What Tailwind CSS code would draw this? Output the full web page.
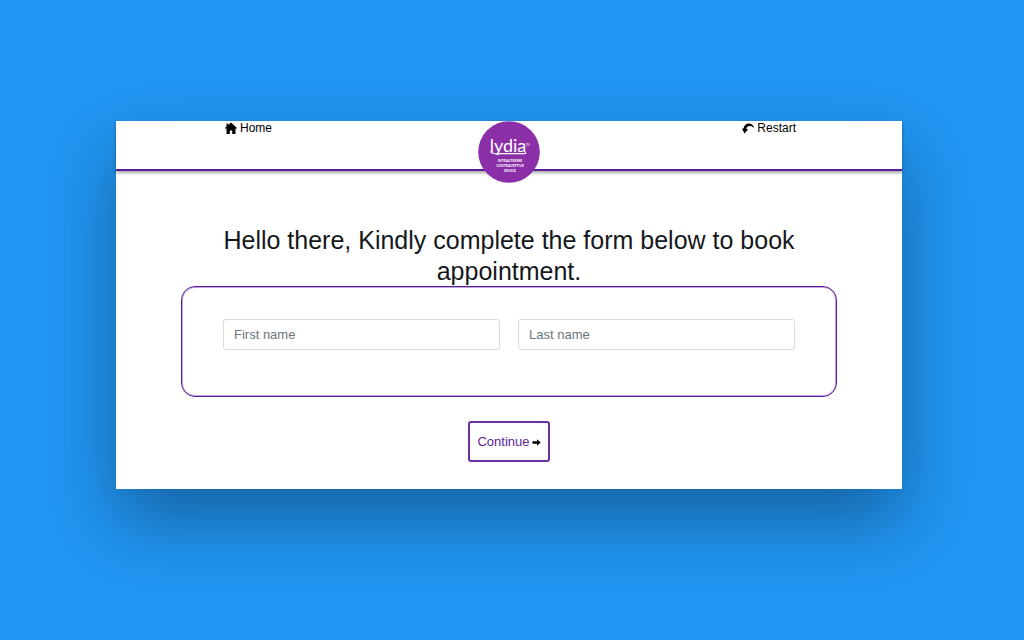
<!DOCTYPE html>
<html lang="en">
<head>
<meta charset="utf-8">
<meta name="viewport" content="width=device-width, initial-scale=1">
<title>Book appointment</title>
<script src="https://cdn.jsdelivr.net/npm/@tailwindcss/browser@4"></script>
</head>
<body class="min-h-screen bg-[#2196f3] pt-[121px] pr-1.5 pb-10 font-['Liberation_Sans',Arial,sans-serif] text-[#15181b]">
<div class="mx-auto max-w-[786px] bg-white pb-[27px] shadow-[0_32px_68px_rgba(0,0,0,0.34)]">
  <header class="relative h-[50px] border-b-2 border-[#5b1d99] px-[106px] text-xs leading-[14px] text-black shadow-[0_2px_3px_rgba(0,0,0,0.35)]">
    <nav class="flex justify-between">
      <a href="#" class="flex items-center gap-[3px] pl-[3px]">
        <svg class="size-3" viewBox="0 0 12 12" aria-hidden="true"><path d="M6 .4 3.200 3V1.500H1.500v3.100L0 6.100l.5.700 1-.5V12H4.800V8.500h2.400V12h3.300V6.300l1 .5.500-.7z"/></svg>
        Home
      </a>
      <a href="#" class="flex items-center gap-[3px]">
        <svg class="size-3" viewBox="0 0 12 12" aria-hidden="true"><path d="M0 6.700 1.500 6.400C2.200 3 4.700 1.200 7.400 1.600c2.600.4 4.300 2.200 4.600 4.800C10.600 4.500 9.300 3.900 7.700 3.900 5.900 3.900 4.700 4.900 4.300 6.700L6 7.400 2.500 11.500z"/></svg>
        Restart
      </a>
    </nav>
    <svg class="absolute top-0 left-1/2 size-[62px] -translate-x-1/2" viewBox="0 0 62 62" role="img" aria-label="Lydia intrauterine contraceptive device">
      <circle cx="31" cy="31" r="30.800" fill="#8b2fa9"/>
      <g fill="#fff" text-anchor="middle" font-family="Lato, sans-serif">
        <text x="30" y="31" font-size="18">lydia</text>
        <text x="49.500" y="25" font-size="3">TM</text>
        <g font-size="3.400" font-weight="700">
          <text x="32" y="41">INTRAUTERINE</text>
          <text x="32" y="46">CONTRACEPTIVE</text>
          <text x="32" y="51">DEVICE</text>
        </g>
      </g>
      <path d="M12.500 30.500C14 33 18 33 22 32.700H46.500C48 32.700 48 31.500 47 31" fill="none" stroke="#fff" stroke-width="1.200"/>
    </svg>
  </header>
  <main class="px-[66px] pt-[54px]">
    <h1 class="mx-auto max-w-[574px] text-center text-[25px] leading-[31px]">Hello there, Kindly complete the form below to book appointment.</h1>
    <form class="-mt-px">
      <div class="-mr-px -ml-px grid grid-cols-2 gap-[18px] rounded-[14px] border border-[#5b1d99] px-[41px] pt-8 pb-[46px] shadow-[inset_0_0_0_1px_rgba(91,29,153,0.4)]">
        <input type="text" aria-label="First name" placeholder="First name" class="h-[31px] w-full min-w-0 rounded-[3px] border border-[#d5dce2] px-2.5 text-[13px] placeholder:text-[#6c757d]">
        <input type="text" aria-label="Last name" placeholder="Last name" class="h-[31px] w-full min-w-0 rounded-[3px] border border-[#d5dce2] px-2.5 text-[13px] placeholder:text-[#6c757d]">
      </div>
      <button type="submit" class="mx-auto mt-6 flex h-[41px] items-center gap-0.5 rounded-[3px] border-2 border-[#6a2fa3] px-[7px] text-[13px] text-[#5b1d99]">
        Continue
        <svg class="h-2 w-[9px]" viewBox="0 0 9 8" aria-hidden="true"><path d="M.5 3.200H5V1.200l3.700 3.300L5 7.800V5.800H.5z" fill="#000"/></svg>
      </button>
    </form>
  </main>
</div>
</body>
</html>
